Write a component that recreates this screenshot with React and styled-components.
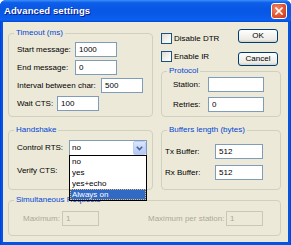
import React from 'react';
import styled, { createGlobalStyle } from 'styled-components';

const Global = createGlobalStyle`
  html, body { margin: 0; padding: 0; background: #ffffff; }
  body { font-family: "Liberation Sans", Arial, sans-serif; font-size: 8px; line-height: 10px; }
  #root { width: 291px; height: 245px; }
`;

const Window = styled.div`
  width: 291px;
  height: 245px;
  box-sizing: border-box;
  display: flex;
  flex-direction: column;
  background: linear-gradient(90deg, #0831D9 0, #0055E5 1px, #0055E5 290px, #0831D9 291px);
  border-radius: 6px 6px 0 0;
  overflow: hidden;
`;

const TitleBar = styled.div`
  height: 22px;
  flex: none;
  display: flex;
  align-items: center;
  justify-content: space-between;
  padding: 0 4px 0 4px;
  background: linear-gradient(180deg, #3D8FFA 0%, #0E5FEA 12%, #0856E4 45%, #0A5CEB 80%, #0B61F2 90%, #0049D4 100%);
`;

const Title = styled.span`
  color: #ffffff;
  font-weight: bold;
  font-size: 9.5px;
  letter-spacing: 0.1px;
  text-shadow: 1px 1px 0 #0A1883;
`;

const CloseButton = styled.div`
  width: 16px;
  height: 16px;
  box-sizing: border-box;
  border: 1px solid #ffffff;
  border-radius: 3px;
  background: radial-gradient(circle at 35% 35%, #F08B6C 0%, #E0552F 55%, #C7361A 100%);
  display: flex;
  align-items: center;
  justify-content: center;
`;

const Client = styled.div`
  flex: 1;
  margin: 0 3px 3px;
  background: #ECE9D8;
  padding: 6px 7px 0 5px;
  display: flex;
  flex-direction: column;
`;

const MainGrid = styled.div`
  display: grid;
  grid-template-columns: 145px 120px;
  column-gap: 8px;
  row-gap: 8px;
`;

const Group = styled.fieldset`
  margin: ${p => p.$mt || 0}px 0 0;
  padding: 0;
  min-width: 0;
  box-sizing: border-box;
  height: ${p => p.$h}px;
  border: 1px solid #D0D0BF;
  border-radius: 4px;
`;

const Legend = styled.legend`
  margin-left: 5px;
  padding: 0 2px;
  color: #0046D5;
  font-size: 8px;
  line-height: 10px;
`;

const GroupBody = styled.div`
  display: flex;
  flex-direction: ${p => (p.$row ? 'row' : 'column')};
  align-items: ${p => (p.$row ? 'center' : 'stretch')};
  gap: ${p => p.$gap || 0}px;
  padding: ${p => p.$pad};
`;

const Row = styled.div`
  display: flex;
  align-items: center;
  height: ${p => p.$h || 15}px;
`;

const Label = styled.span`
  flex: none;
  width: ${p => p.$w}px;
  white-space: nowrap;
  color: ${p => (p.$disabled ? '#ACA899' : '#000000')};
`;

const TextBox = styled.input`
  flex: none;
  width: ${p => p.$w}px;
  height: 15px;
  box-sizing: border-box;
  margin: 0;
  padding: 0 3px;
  border: 1px solid ${p => (p.disabled ? '#C9C7BA' : '#7F9DB9')};
  background: ${p => (p.disabled ? '#ECE9D8' : '#ffffff')};
  color: ${p => (p.disabled ? '#ACA899' : '#000000')};
  font: inherit;
  outline: none;
`;

const RightStack = styled.div`
  display: flex;
  flex-direction: column;
`;

const TopControls = styled.div`
  height: 38px;
  display: flex;
  justify-content: space-between;
`;

const Checks = styled.div`
  display: flex;
  flex-direction: column;
  gap: 7px;
  padding-top: 5px;
`;

const CheckRow = styled.label`
  display: flex;
  align-items: center;
  gap: 2px;
  height: 11px;
`;

const CheckBox = styled.span`
  width: 11px;
  height: 11px;
  box-sizing: border-box;
  border: 1px solid #1C5180;
  background: linear-gradient(135deg, #DCDCD7 0%, #F4F4F0 60%, #FFFFFF 100%);
`;

const Buttons = styled.div`
  display: flex;
  flex-direction: column;
  gap: 9px;
  padding: 1px 3px 0 0;
`;

const Button = styled.button`
  width: 40px;
  height: 14px;
  box-sizing: border-box;
  margin: 0;
  padding: 0;
  border: 1px solid #003C74;
  border-radius: 3px;
  background: linear-gradient(180deg, #FFFFFF 0%, #F3F2EE 50%, #ECEBE6 80%, #D6D0C5 100%);
  font: inherit;
  color: #000000;
  display: flex;
  align-items: center;
  justify-content: center;
`;

const Combo = styled.div`
  position: relative;
  flex: none;
  width: 78px;
  height: 16px;
  box-sizing: border-box;
  border: 1px solid #7F9DB9;
  background: #ffffff;
  display: flex;
  align-items: center;
`;

const ComboText = styled.span`
  flex: 1;
  padding-left: 2px;
`;

const ComboButton = styled.span`
  width: 13px;
  height: 14px;
  box-sizing: border-box;
  border: 1px solid #BACDF6;
  border-radius: 2px;
  background: linear-gradient(180deg, #DCE7FD 0%, #C3D5FC 50%, #B4C8F6 100%);
  display: flex;
  align-items: center;
  justify-content: center;
`;

const DropList = styled.ul`
  position: absolute;
  top: 14px;
  left: -1px;
  width: 78px;
  box-sizing: border-box;
  margin: 0;
  padding: 0;
  list-style: none;
  border: 1px solid #000000;
  background: #ffffff;
  z-index: 10;
`;

const DropItem = styled.li`
  height: 11px;
  line-height: 11px;
  padding-left: 2px;
  background: ${p => (p.$selected ? '#316AC5' : '#ffffff')};
  color: ${p => (p.$selected ? '#ffffff' : '#000000')};
  outline: ${p => (p.$selected ? '1px dotted #E8B96A' : 'none')};
  outline-offset: -1px;
`;

const Spacer = styled.span`
  flex: none;
  width: ${p => p.$w}px;
`;

const Field = ({ label, w, boxW, value = '', disabled }) => (
  <Row>
    <Label $w={w} $disabled={disabled}>{label}</Label>
    <TextBox $w={boxW} defaultValue={value} readOnly disabled={disabled} />
  </Row>
);

const Check = ({ children }) => (
  <CheckRow>
    <CheckBox />
    <span>{children}</span>
  </CheckRow>
);

const Chevron = () => (
  <svg width="7" height="5" viewBox="0 0 7 5">
    <path d="M0.8 0.8 L3.5 3.6 L6.2 0.8" fill="none" stroke="#4D6185" strokeWidth="1.5" />
  </svg>
);

export default function App() {
  const options = ['no', 'yes', 'yes+echo', 'Always on'];
  return (
    <>
      <Global />
      <Window>
        <TitleBar>
          <Title>Advanced settings</Title>
          <CloseButton>
            <svg width="8" height="8" viewBox="0 0 8 8">
              <path d="M1 1 L7 7 M7 1 L1 7" stroke="#ffffff" strokeWidth="1.6" strokeLinecap="square" />
            </svg>
          </CloseButton>
        </TitleBar>
        <Client>
          <MainGrid>
            <Group $h={89}>
              <Legend>Timeout (ms)</Legend>
              <GroupBody $gap={3} $pad="4px 0 0 8px">
                <Field label="Start message:" w={58} boxW={42} value="1000" />
                <Field label="End message:" w={58} boxW={42} value="0" />
                <Field label="Interval between char:" w={84} boxW={42} value="500" />
                <Field label="Wait CTS:" w={40} boxW={42} value="100" />
              </GroupBody>
            </Group>
            <RightStack>
              <TopControls>
                <Checks>
                  <Check>Disable DTR</Check>
                  <Check>Enable IR</Check>
                </Checks>
                <Buttons>
                  <Button>OK</Button>
                  <Button>Cancel</Button>
                </Buttons>
              </TopControls>
              <Group $h={51}>
                <Legend>Protocol</Legend>
                <GroupBody $gap={5} $pad="1px 0 0 11px">
                  <Field label="Station:" w={35} boxW={56} value="" />
                  <Field label="Retries:" w={35} boxW={56} value="0" />
                </GroupBody>
              </Group>
            </RightStack>
            <Group $h={65}>
              <Legend>Handshake</Legend>
              <GroupBody $gap={7} $pad="5px 0 0 8px">
                <Row $h={16}>
                  <Label $w={52}>Control RTS:</Label>
                  <Combo>
                    <ComboText>no</ComboText>
                    <ComboButton><Chevron /></ComboButton>
                    <DropList>
                      {options.map(o => (
                        <DropItem key={o} $selected={o === 'Always on'}>{o}</DropItem>
                      ))}
                    </DropList>
                  </Combo>
                </Row>
                <Row $h={16}>
                  <Label $w={52}>Verify CTS:</Label>
                  <Combo>
                    <ComboText />
                    <ComboButton><Chevron /></ComboButton>
                  </Combo>
                </Row>
              </GroupBody>
            </Group>
            <Group $h={65}>
              <Legend>Buffers length (bytes)</Legend>
              <GroupBody $gap={6} $pad="9px 0 0 3px">
                <Field label="Tx Buffer:" w={50} boxW={48} value="512" />
                <Field label="Rx Buffer:" w={50} boxW={48} value="512" />
              </GroupBody>
            </Group>
          </MainGrid>
          <Group $h={41} $mt={5}>
            <Legend>Simultaneous Requests</Legend>
            <GroupBody $row $pad="6px 0 0 14px">
              <Label $w={39} $disabled>Maximum:</Label>
              <TextBox $w={37} defaultValue="1" readOnly disabled />
              <Spacer $w={49} />
              <Label $w={78} $disabled>Maximum per station:</Label>
              <TextBox $w={37} defaultValue="1" readOnly disabled />
            </GroupBody>
          </Group>
        </Client>
      </Window>
    </>
  );
}
